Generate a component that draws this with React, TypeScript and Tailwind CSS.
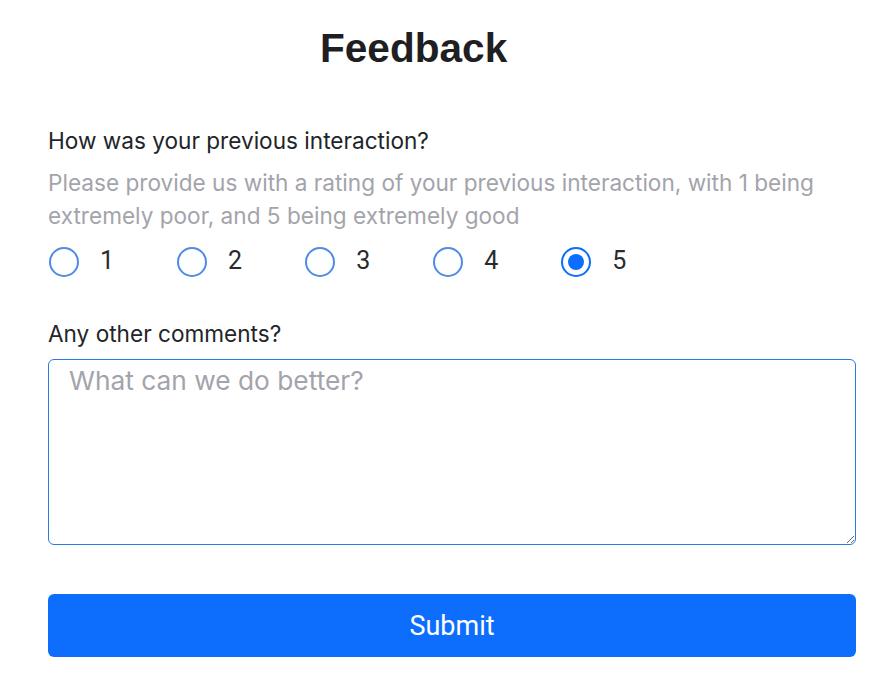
import { useState } from "react";

const ratings = [1, 2, 3, 4, 5];

function Radio({ checked }: { checked: boolean }) {
  if (checked) {
    return (
      <span className="flex h-[30px] w-[30px] items-center justify-center rounded-full border-2 border-[#0d6efd] bg-white">
        <span className="h-[16px] w-[16px] rounded-full bg-[#0d6efd]" />
      </span>
    );
  }
  return <span className="block h-[30px] w-[30px] rounded-full border-2 border-[#4f8ce6] bg-white" />;
}

export default function App() {
  const [rating, setRating] = useState(5);

  return (
    <div className="min-h-screen bg-white pt-[25px] pl-[48px] pr-[26px] font-['Inter',sans-serif] text-[#212529]">
      <h1 className="ml-[272px] font-['Liberation_Sans',Arial,sans-serif] text-[40.6px] font-bold leading-[46px] text-[#1f1f23]">
        Feedback
      </h1>

      <p className="mt-[55px] text-[22.6px] leading-[30px]">How was your previous interaction?</p>
      <p className="mt-[10px] text-[22.6px] leading-[33px] text-[#a3a4ab]">
        Please provide us with a rating of your previous interaction, with 1 being extremely poor, and 5 being extremely good
      </p>

      <div className="mt-[15px] flex items-center gap-[63px] pl-[1px]">
        {ratings.map((r) => (
          <label key={r} className="flex cursor-pointer items-center" onClick={() => setRating(r)}>
            <Radio checked={rating === r} />
            <span className="ml-[21px] -mt-[3px] font-['Roboto',sans-serif] text-[25px] leading-[30px] text-[#2b2b2b]">
              {r}
            </span>
          </label>
        ))}
      </div>

      <p className="mt-[42px] text-[22.6px] leading-[30px]">Any other comments?</p>

      <textarea
        placeholder="What can we do better?"
        className="mt-[10px] block h-[186px] w-full rounded-[6px] border border-[#2d79e0] px-[20px] pt-[4px] font-['Inter',sans-serif] text-[26.3px] leading-[34px] outline-none placeholder:text-[#a3a4ab]"
      />

      <button className="mt-[49px] h-[63px] w-full rounded-[6px] bg-[#0d6efd] pt-[2px] font-['Roboto',sans-serif] text-[27px] text-white">
        Submit
      </button>
    </div>
  );
}
